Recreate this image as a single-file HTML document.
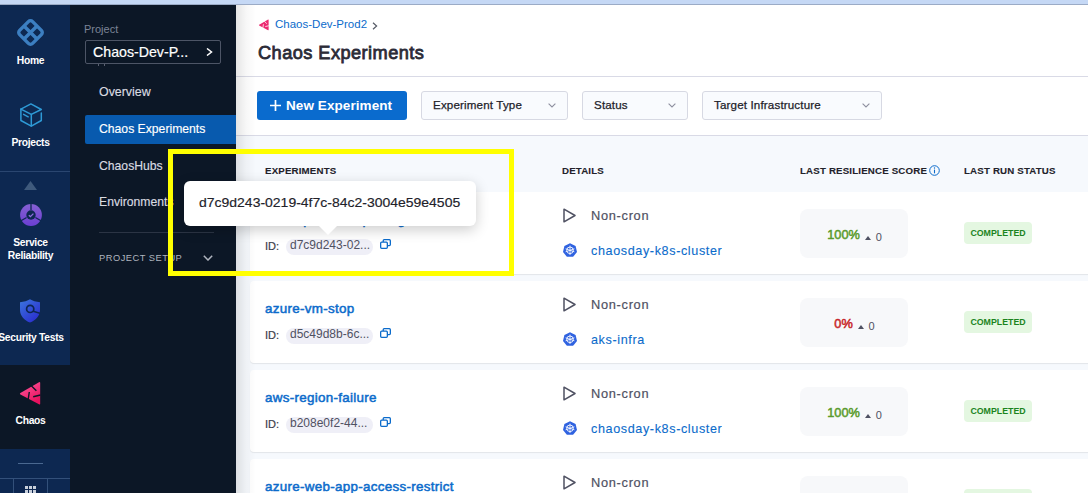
<!DOCTYPE html>
<html><head><meta charset="utf-8">
<style>
*{box-sizing:border-box;margin:0;padding:0}
html,body{width:1088px;height:493px;overflow:hidden;background:#fff;font-family:"Liberation Sans",sans-serif}
.abs{position:absolute}
#top{left:0;top:0;width:1088px;height:5px;background:#c5d8f5;border-bottom:1px solid #9babc6;z-index:5}
#nav1{left:0;top:5px;width:70px;height:488px;background:#0d2851;overflow:hidden}
#nav2{left:70px;top:5px;width:166px;height:488px;background:#0c1726;overflow:hidden}
#main{left:236px;top:5px;width:852px;height:488px;background:#fff;overflow:hidden}
.lbl{position:absolute;color:#fff;font-weight:bold;font-size:10.3px;letter-spacing:-0.3px;text-align:center;width:61px;left:0;line-height:13px}
.n2{position:absolute;left:29px;color:#d9dbe0;font-size:12.2px;line-height:14px;white-space:nowrap;-webkit-text-stroke:0.15px}
.dd{position:absolute;top:86px;height:29px;background:#f9fbfe;border:1px solid #d7d9e3;border-radius:3px}
.dd span{position:absolute;left:11px;top:5.3px;font-size:11.6px;letter-spacing:0.15px;line-height:15px;color:#22222a;white-space:nowrap;-webkit-text-stroke:0.25px}
.dd svg{position:absolute;right:11px;top:11px}
.th{position:absolute;top:159.6px;font-size:9.7px;letter-spacing:0.18px;font-weight:bold;-webkit-text-stroke:0.1px;color:#22222a;line-height:12px;white-space:nowrap}
.row{position:absolute;left:14px;width:850px;height:82px;background:#fff;border-radius:4px;box-shadow:0 1px 1px rgba(0,0,0,0.08)}
.nm{position:absolute;left:15px;top:20px;color:#0b6bcb;font-size:13.4px;letter-spacing:0.3px;font-weight:normal;-webkit-text-stroke:0.5px;line-height:16px;white-space:nowrap}
.idl{position:absolute;left:15px;top:48px;color:#3c3e4a;font-size:11px;line-height:13px;-webkit-text-stroke:0.2px}
.pill{position:absolute;left:36px;top:47px;width:87px;height:16px;background:#efeff7;border-radius:8px;color:#4f5162;font-size:12px;line-height:13.6px;padding-left:4px;white-space:nowrap}
.nc{position:absolute;left:341px;top:15.7px;color:#4f5162;font-size:12.8px;letter-spacing:0.7px;line-height:16px;-webkit-text-stroke:0.2px}
.inf{position:absolute;left:341px;top:50.7px;color:#0b6bcb;font-size:12.6px;letter-spacing:0.62px;line-height:16px;white-space:nowrap;-webkit-text-stroke:0.1px}
.sc{position:absolute;left:550px;top:17px;width:108px;height:49px;background:#f7f8fa;border-radius:8px;display:flex;align-items:center;justify-content:center;padding-top:3px;padding-left:1px}
.sc b{font-size:12.8px;line-height:16px;font-weight:normal;-webkit-text-stroke:0.5px}
.tri{display:inline-block;width:0;height:0;border-left:3.5px solid transparent;border-right:3.5px solid transparent;border-bottom:4px solid #4f5162;margin-left:5.4px;margin-top:5px}
.z{font-size:11px;line-height:14px;color:#4f5162;margin-left:4.3px;margin-top:3px}
.badge{position:absolute;left:714px;top:30px;width:68px;height:22px;background:#e4f7e1;border-radius:4px;color:#1b841d;font-size:8.8px;font-weight:bold;line-height:22px;text-align:center}
</style></head><body>
<div id="top" class="abs"></div>

<div id="nav1" class="abs">
  <!-- home icon -->
  <svg class="abs" style="left:17px;top:14px" width="27" height="27" viewBox="0 0 27 27">
    <g transform="rotate(45 13.5 13.5)" fill="none" stroke="#3c7fc1" stroke-width="3.4">
      <rect x="4.3" y="4.3" width="18.4" height="18.4" rx="3"/>
      <path d="M13.5 4.3 V22.7 M4.3 13.5 H22.7"/>
    </g>
  </svg>
  <div class="lbl" style="top:49.2px">Home</div>
  <!-- projects icon -->
  <svg class="abs" style="left:19.5px;top:98px" width="23" height="24" viewBox="0 0 23 24">
    <g fill="none" stroke="#2e9ad6" stroke-width="1.5" stroke-linejoin="round" stroke-linecap="round">
      <path d="M0.9 6.1 L10.9 0.9 L21.3 6.5 L11.3 11.4 Z"/>
      <path d="M0.9 6.1 V17.5 L11.3 23.1 L21.3 17.5 V10"/>
      <path d="M11.3 11.4 V23.1"/>
      <path d="M3.6 11.4 L8.2 13.8"/>
    </g>
  </svg>
  <div class="lbl" style="top:131.2px">Projects</div>
  <div class="abs" style="left:0;top:166px;width:70px;height:1px;background:#2a4670"></div>
  <svg class="abs" style="left:24px;top:176px" width="13" height="9" viewBox="0 0 13 9"><path d="M6.5 0 L13 9 L0 9 Z" fill="#3f5a7c"/></svg>
  <!-- service reliability -->
  <svg class="abs" style="left:19.5px;top:199px" width="22" height="22" viewBox="0 0 22 22">
    <defs><linearGradient id="gsr" x1="0" y1="0" x2="0" y2="1"><stop offset="0" stop-color="#8560d2"/><stop offset="1" stop-color="#6b3fd2"/></linearGradient></defs>
    <circle cx="11" cy="11" r="10.9" fill="url(#gsr)"/>
    <circle cx="11" cy="11" r="4.7" fill="#0d2851"/>
    <path d="M11 0 L11 6 M1 16.8 L6.6 13.5 M21 16.8 L15.4 13.5" stroke="#0d2851" stroke-width="1.3"/>
    <path d="M8.8 11.2 L10.4 12.6 L13.4 9.6" fill="none" stroke="#8f6de0" stroke-width="1.3"/>
  </svg>
  <div class="lbl" style="top:231.4px">Service<br>Reliability</div>
  <!-- security tests -->
  <svg class="abs" style="left:20px;top:293.5px" width="20" height="24" viewBox="0 0 20 24">
    <defs><linearGradient id="gst" x1="0" y1="0" x2="0.8" y2="1"><stop offset="0" stop-color="#3b76dc"/><stop offset="1" stop-color="#2a2ccf"/></linearGradient></defs>
    <path d="M10 0.3 C12.5 1.8 16 2.8 20 3.3 L20 11 C20 17 15.5 21.5 10 23.6 C4.5 21.5 0 17 0 11 L0 3.3 C4 2.8 7.5 1.8 10 0.3 Z" fill="url(#gst)"/>
    <circle cx="10.2" cy="9.9" r="3.6" fill="none" stroke="#0d2552" stroke-width="1.7"/>
    <path d="M13.2 12.2 L20 14.3" stroke="#0d2552" stroke-width="1.7"/>
  </svg>
  <div class="lbl" style="top:326.3px;left:-4px;width:70px;white-space:nowrap">Security Tests</div>
  <!-- chaos selected -->
  <div class="abs" style="left:0;top:360px;width:70px;height:84px;background:#0c1726"></div>
  <svg class="abs" style="left:19px;top:376px" width="23" height="25" viewBox="0 0 23 25">
    <defs><linearGradient id="gch" x1="0" y1="0" x2="0.6" y2="1"><stop offset="0" stop-color="#ff5da0"/><stop offset="1" stop-color="#e8115e"/></linearGradient></defs>
    <path d="M20 1.2 Q21.2 0.6 21.2 2 L21.2 22.4 Q21.2 23.8 20 23.2 L1.4 13.4 Q0.4 12.7 1.4 12.1 Z" fill="url(#gch)"/>
    <path d="M12 4.6 L17.4 9.8 M9.2 18.4 L10.3 11 M21.5 14 L14.2 15.8" fill="none" stroke="#0c1726" stroke-width="1.4"/>
  </svg>
  <div class="lbl" style="top:409.3px">Chaos</div>
  <div class="abs" style="left:0;top:444.3px;width:70px;height:45px;background:#0d2851"></div>
  <div class="abs" style="left:18px;top:458px;width:25px;height:1px;background:#4a6890"></div>
  <div class="abs" style="left:0;top:473px;width:70px;height:1px;background:#33507a"></div>
  <div class="abs" style="left:14px;top:474px;width:33px;height:20px;background:#0d2650"></div>
  <div class="abs" style="left:13px;top:473px;width:1px;height:20px;background:#33507a"></div>
  <div class="abs" style="left:47px;top:473px;width:1px;height:20px;background:#33507a"></div>
  <svg class="abs" style="left:25px;top:481px" width="12" height="12" viewBox="0 0 12 12"><g fill="#c8cfdb"><rect x="0" y="0" width="3" height="3"/><rect x="4" y="0" width="3" height="3"/><rect x="8" y="0" width="3" height="3"/><rect x="0" y="4" width="3" height="3"/><rect x="4" y="4" width="3" height="3"/><rect x="8" y="4" width="3" height="3"/></g></svg>
</div>

<div id="nav2" class="abs">
  <div class="abs" style="left:14px;top:17px;color:#7c8496;font-size:11px;line-height:14px">Project</div>
  <div class="abs" style="left:15px;top:35px;width:136px;height:24px;border:1px solid #4d5566;border-radius:2px"></div>
  <div class="abs" style="left:23px;top:39px;color:#fff;font-size:14.2px;line-height:16px;white-space:nowrap;-webkit-text-stroke:0.2px">Chaos-Dev-P...</div>
  <div class="abs" style="left:28px;top:59px;width:1px;height:2px;background:#5a6070"></div><div class="abs" style="left:34px;top:59px;width:1px;height:2px;background:#5a6070"></div>
  <svg class="abs" style="left:136px;top:43px" width="7" height="8" viewBox="0 0 7 8"><path d="M1 0.5 L5.5 4 L1 7.5" fill="none" stroke="#fff" stroke-width="1.5"/></svg>
  <div class="n2" style="top:80px;font-size:12.4px">Overview</div>
  <div class="abs" style="left:15px;top:110px;width:151px;height:29px;background:#085aae;border-radius:2px 0 0 2px"></div>
  <div class="n2" style="top:117px;color:#fff">Chaos Experiments</div>
  <div class="n2" style="top:154px">ChaosHubs</div>
  <div class="n2" style="top:190px">Environments</div>
  <div class="abs" style="left:29px;top:227px;width:115px;height:1px;background:#2b3444"></div>
  <div class="n2" style="top:246px;font-size:9.3px;letter-spacing:0.5px;color:#b0b5bf;-webkit-text-stroke:0">PROJECT SETUP</div>
  <svg class="abs" style="left:132.5px;top:249.5px" width="10" height="6" viewBox="0 0 10 6"><path d="M0.8 0.8 L5 5 L9.2 0.8" fill="none" stroke="#b0b5bf" stroke-width="1.5"/></svg>
</div>

<div id="main" class="abs">
  <!-- header -->
  <svg class="abs" style="left:22px;top:14px" width="12" height="12" viewBox="0 0 23 25">
    <path d="M20 1.2 Q21.2 0.6 21.2 2 L21.2 22.4 Q21.2 23.8 20 23.2 L1.4 13.4 Q0.4 12.7 1.4 12.1 Z" fill="#ec2a72"/>
    <path d="M12 4.6 L17.4 9.8 M9.2 18.4 L10.3 11 M21.5 14 L14.2 15.8" fill="none" stroke="#fff" stroke-width="1.6"/>
  </svg>
  <div class="abs" style="left:39px;top:12px;color:#0b6bcb;font-size:11.5px;line-height:14px;white-space:nowrap">Chaos-Dev-Prod2</div>
  <svg class="abs" style="left:136px;top:17px" width="6" height="8" viewBox="0 0 6 8"><path d="M1 0.8 L4.6 4 L1 7.2" fill="none" stroke="#555a66" stroke-width="1.2"/></svg>
  <div class="abs" style="left:22px;top:37px;color:#2b2b37;font-size:18.2px;font-weight:normal;-webkit-text-stroke:0.8px;letter-spacing:0.45px;line-height:22px;white-space:nowrap">Chaos Experiments</div>
  <div class="abs" style="left:0;top:71px;width:852px;height:1px;background:#d9dae6"></div>
  <!-- toolbar -->
  <div class="abs" style="left:21px;top:86px;width:150px;height:29px;background:#0a6bce;border-radius:3px"></div>
  <svg class="abs" style="left:34px;top:95px" width="11" height="11" viewBox="0 0 11 11"><path d="M5.5 0 V11 M0 5.5 H11" stroke="#fff" stroke-width="1.7"/></svg>
  <div class="abs" style="left:50px;top:93px;color:#fff;font-size:13.5px;font-weight:bold;letter-spacing:0.08px;line-height:16px;white-space:nowrap">New Experiment</div>
  <div class="dd" style="left:185px;width:147px"><span>Experiment Type</span><svg width="8" height="5" viewBox="0 0 8 5"><path d="M0.6 0.6 L4 4 L7.4 0.6" fill="none" stroke="#8e90a0" stroke-width="1.1"/></svg></div>
  <div class="dd" style="left:346px;width:106px"><span>Status</span><svg width="8" height="5" viewBox="0 0 8 5"><path d="M0.6 0.6 L4 4 L7.4 0.6" fill="none" stroke="#8e90a0" stroke-width="1.1"/></svg></div>
  <div class="dd" style="left:466px;width:180px"><span>Target Infrastructure</span><svg width="8" height="5" viewBox="0 0 8 5"><path d="M0.6 0.6 L4 4 L7.4 0.6" fill="none" stroke="#8e90a0" stroke-width="1.1"/></svg></div>
  <div class="abs" style="left:0;top:130px;width:852px;height:1px;background:#d9dae6"></div>
  <!-- table -->
  <div class="abs" style="left:0;top:131px;width:852px;height:357px;background:#f6f9fd"></div>
  <div class="th" style="left:29px">EXPERIMENTS</div>
  <div class="th" style="left:326px">DETAILS</div>
  <div class="th" style="left:564px">LAST RESILIENCE SCORE</div>
  <svg class="abs" style="left:693px;top:160px" width="11" height="11" viewBox="0 0 11 11"><circle cx="5.5" cy="5.5" r="4.8" fill="none" stroke="#0b6bcb" stroke-width="1"/><path d="M5.5 4.6 V8.3" stroke="#0b6bcb" stroke-width="1.1"/><circle cx="5.5" cy="3" r="0.7" fill="#0b6bcb"/></svg>
  <div class="th" style="left:728px">LAST RUN STATUS</div>
  <div class="row" style="top:187px">
    <div class="nm">kafka-pod-cat-ops-hog</div>
    <div class="idl">ID:</div><div class="pill">d7c9d243-02...</div>
    <svg class="abs" style="left:130px;top:47.4px" width="11" height="10" viewBox="0 0 11 10"><g fill="none" stroke="#0b6bcb" stroke-width="1.3"><rect x="0.65" y="3.15" width="6.7" height="6.2" rx="1"/><path d="M3.2 3.1 V1.65 Q3.2 0.65 4.2 0.65 H9.35 Q10.35 0.65 10.35 1.65 V5.6 Q10.35 6.6 9.35 6.6 H7.4"/></g></svg>
    <svg class="abs" style="left:313px;top:15.5px" width="13" height="15" viewBox="0 0 13 15"><path d="M1 1.2 L12 7.5 L1 13.8 Z" fill="none" stroke="#4f5162" stroke-width="1.5" stroke-linejoin="round"/></svg>
    <div class="nc">Non-cron</div>
    <svg class="abs" style="left:313px;top:51px" width="14" height="14" viewBox="0 0 14 14"><path d="M7 0.3 L12.6 3 L14 9 L10.1 13.8 L3.9 13.8 L0 9 L1.4 3 Z" fill="#2f62e0"/><circle cx="7" cy="7.3" r="3.3" fill="none" stroke="#fff" stroke-width="0.9"/><path d="M7 2.6 V12 M2.6 5.8 L11.4 8.8 M11.4 5.8 L2.6 8.8" stroke="#fff" stroke-width="0.8"/></svg>
    <div class="inf">chaosday-k8s-cluster</div>
    <div class="sc"><b style="color:#5a9b2c">100%</b><span class="tri"></span><span class="z">0</span></div>
    <div class="badge">COMPLETED</div>
  </div>
  <div class="row" style="top:276px">
    <div class="nm">azure-vm-stop</div>
    <div class="idl">ID:</div><div class="pill">d5c49d8b-6c...</div>
    <svg class="abs" style="left:130px;top:47.4px" width="11" height="10" viewBox="0 0 11 10"><g fill="none" stroke="#0b6bcb" stroke-width="1.3"><rect x="0.65" y="3.15" width="6.7" height="6.2" rx="1"/><path d="M3.2 3.1 V1.65 Q3.2 0.65 4.2 0.65 H9.35 Q10.35 0.65 10.35 1.65 V5.6 Q10.35 6.6 9.35 6.6 H7.4"/></g></svg>
    <svg class="abs" style="left:313px;top:15.5px" width="13" height="15" viewBox="0 0 13 15"><path d="M1 1.2 L12 7.5 L1 13.8 Z" fill="none" stroke="#4f5162" stroke-width="1.5" stroke-linejoin="round"/></svg>
    <div class="nc">Non-cron</div>
    <svg class="abs" style="left:313px;top:51px" width="14" height="14" viewBox="0 0 14 14"><path d="M7 0.3 L12.6 3 L14 9 L10.1 13.8 L3.9 13.8 L0 9 L1.4 3 Z" fill="#2f62e0"/><circle cx="7" cy="7.3" r="3.3" fill="none" stroke="#fff" stroke-width="0.9"/><path d="M7 2.6 V12 M2.6 5.8 L11.4 8.8 M11.4 5.8 L2.6 8.8" stroke="#fff" stroke-width="0.8"/></svg>
    <div class="inf">aks-infra</div>
    <div class="sc"><b style="color:#c8272a">0%</b><span class="tri"></span><span class="z">0</span></div>
    <div class="badge">COMPLETED</div>
  </div>
  <div class="row" style="top:365px">
    <div class="nm">aws-region-failure</div>
    <div class="idl">ID:</div><div class="pill">b208e0f2-44...</div>
    <svg class="abs" style="left:130px;top:47.4px" width="11" height="10" viewBox="0 0 11 10"><g fill="none" stroke="#0b6bcb" stroke-width="1.3"><rect x="0.65" y="3.15" width="6.7" height="6.2" rx="1"/><path d="M3.2 3.1 V1.65 Q3.2 0.65 4.2 0.65 H9.35 Q10.35 0.65 10.35 1.65 V5.6 Q10.35 6.6 9.35 6.6 H7.4"/></g></svg>
    <svg class="abs" style="left:313px;top:15.5px" width="13" height="15" viewBox="0 0 13 15"><path d="M1 1.2 L12 7.5 L1 13.8 Z" fill="none" stroke="#4f5162" stroke-width="1.5" stroke-linejoin="round"/></svg>
    <div class="nc">Non-cron</div>
    <svg class="abs" style="left:313px;top:51px" width="14" height="14" viewBox="0 0 14 14"><path d="M7 0.3 L12.6 3 L14 9 L10.1 13.8 L3.9 13.8 L0 9 L1.4 3 Z" fill="#2f62e0"/><circle cx="7" cy="7.3" r="3.3" fill="none" stroke="#fff" stroke-width="0.9"/><path d="M7 2.6 V12 M2.6 5.8 L11.4 8.8 M11.4 5.8 L2.6 8.8" stroke="#fff" stroke-width="0.8"/></svg>
    <div class="inf">chaosday-k8s-cluster</div>
    <div class="sc"><b style="color:#5a9b2c">100%</b><span class="tri"></span><span class="z">0</span></div>
    <div class="badge">COMPLETED</div>
  </div>
  <div class="row" style="top:454px">
    <div class="nm">azure-web-app-access-restrict</div>
    <div class="idl">ID:</div><div class="pill">a1b2c3d4-5e...</div>
    <svg class="abs" style="left:130px;top:47.4px" width="11" height="10" viewBox="0 0 11 10"><g fill="none" stroke="#0b6bcb" stroke-width="1.3"><rect x="0.65" y="3.15" width="6.7" height="6.2" rx="1"/><path d="M3.2 3.1 V1.65 Q3.2 0.65 4.2 0.65 H9.35 Q10.35 0.65 10.35 1.65 V5.6 Q10.35 6.6 9.35 6.6 H7.4"/></g></svg>
    <svg class="abs" style="left:313px;top:15.5px" width="13" height="15" viewBox="0 0 13 15"><path d="M1 1.2 L12 7.5 L1 13.8 Z" fill="none" stroke="#4f5162" stroke-width="1.5" stroke-linejoin="round"/></svg>
    <div class="nc">Non-cron</div>
    <svg class="abs" style="left:313px;top:51px" width="14" height="14" viewBox="0 0 14 14"><path d="M7 0.3 L12.6 3 L14 9 L10.1 13.8 L3.9 13.8 L0 9 L1.4 3 Z" fill="#2f62e0"/><circle cx="7" cy="7.3" r="3.3" fill="none" stroke="#fff" stroke-width="0.9"/><path d="M7 2.6 V12 M2.6 5.8 L11.4 8.8 M11.4 5.8 L2.6 8.8" stroke="#fff" stroke-width="0.8"/></svg>
    <div class="inf">chaosday-k8s-cluster</div>
    <div class="sc"><b style="color:#5a9b2c">100%</b><span class="tri"></span><span class="z">0</span></div>
    <div class="badge">COMPLETED</div>
  </div>
  
  <!-- left shadow -->
  <div class="abs" style="left:0;top:0;width:20px;height:488px;background:linear-gradient(to right,rgba(0,0,0,0.1),rgba(0,0,0,0.03) 50%,rgba(0,0,0,0))"></div>
</div>

<!-- tooltip -->
<div class="abs" style="left:183.5px;top:180.6px;width:292px;height:45px;background:#fff;border-radius:6px;box-shadow:0 4px 14px rgba(0,0,0,0.2)"></div>
<svg class="abs" style="left:317px;top:224px" width="22" height="12" viewBox="0 0 22 12"><path d="M0 0 L11 11 L22 0 Z" fill="#fff"/></svg>
<div class="abs" style="left:198.5px;top:194.7px;color:#22222a;font-size:12px;letter-spacing:0;-webkit-text-stroke:0.15px;transform:scaleX(1.165);transform-origin:0 0;line-height:16px;white-space:nowrap">d7c9d243-0219-4f7c-84c2-3004e59e4505</div>
<!-- yellow -->
<div class="abs" style="left:168.3px;top:149.3px;width:345.5px;height:126.5px;border:5.5px solid #ffff00"></div>
</body></html>
